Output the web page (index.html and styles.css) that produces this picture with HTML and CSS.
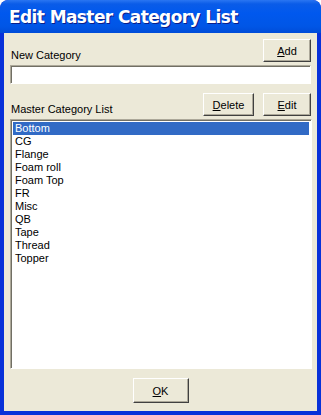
FILE: index.html
```html
<!DOCTYPE html>
<html lang="en">
<head>
  <meta charset="UTF-8" />
  <title>Edit Master Category List</title>
  <link rel="stylesheet" href="styles.css">
</head>
<body>

  <div class="window">
    <!-- TITLE BAR -->
    <div class="titlebar">Edit Master Category List</div>

    <div class="client">
      <!-- NEW CATEGORY -->
      <div class="row">
        <span class="label">New Category</span>
        <button class="btn btn-add"><u>A</u>dd</button>
      </div>
      <input type="text" class="field" />

      <!-- LIST HEADER -->
      <div class="row row-list">
        <span class="label">Master Category List</span>
        <div class="btns">
          <button class="btn btn-del"><u>D</u>elete</button>
          <button class="btn btn-edit"><u>E</u>dit</button>
        </div>
      </div>

      <!-- LIST -->
      <ul class="list">
        <li class="selected">Bottom</li>
        <li>CG</li>
        <li>Flange</li>
        <li>Foam roll</li>
        <li>Foam Top</li>
        <li>FR</li>
        <li>Misc</li>
        <li>QB</li>
        <li>Tape</li>
        <li>Thread</li>
        <li>Topper</li>
      </ul>

      <div class="footer">
        <button class="btn btn-ok"><u>O</u>K</button>
      </div>
    </div>
  </div>

</body>
</html>
```

FILE: styles.css
```css
body {
  margin: 0;
  font-family: "Liberation Sans", Arial, sans-serif;
  font-size: 11px;
  color: #000;
  background: #fff;
}

.window {
  width: 321px;
  height: 415px;
  box-sizing: border-box;
  display: flex;
  flex-direction: column;
  background: #0831d9;
  border-radius: 8px 8px 0 0;
  overflow: hidden;
}

.titlebar {
  height: 33px;
  box-sizing: border-box;
  padding: 7px 0 0 9px;
  font-family: "DejaVu Sans", sans-serif;
  font-weight: bold;
  font-size: 17px;
  letter-spacing: -0.6px;
  color: #fff;
  text-shadow: 1px 1px 0 #0a1e8a;
  background: linear-gradient(#2a76f2 0%, #0a5ce8 12%, #0058ee 40%, #0056e6 80%, #004cd8 100%);
  border-radius: 8px 8px 0 0;
}

.client {
  flex: 1;
  margin: 0 4px 4px 4px;
  padding: 6px 6px 0 6px;
  background: #ece9d8;
  display: flex;
  flex-direction: column;
}

.row {
  display: flex;
  justify-content: space-between;
  align-items: flex-end;
  height: 23px;
}

.label {
  padding: 0 0 1px 1px;
}

.btns {
  display: flex;
  gap: 9px;
}

.btn {
  font-family: "Liberation Sans", Arial, sans-serif;
  font-size: 11px;
  color: #000;
  background: #ece9d8;
  border: 1px solid;
  border-color: #fff #404040 #404040 #fff;
  box-shadow: inset -1px -1px 0 #aca899;
  padding: 0;
  height: 23px;
}

.btn-add,
.btn-edit {
  width: 48px;
}

.btn-del {
  width: 51px;
}

.btn-ok {
  width: 56px;
  height: 25px;
}

.field {
  margin: 3px 0 0 0;
  width: 301px;
  height: 19px;
  box-sizing: border-box;
  border: 1px solid;
  border-color: #aca899 #fff #fff #aca899;
  box-shadow: inset 1px 1px 0 #716f64;
  background: #fff;
  padding: 0;
}

.row-list {
  margin-top: 9px;
}

.list {
  list-style: none;
  margin: 3px 0 0 0;
  padding: 2px 2px;
  width: 302px;
  height: 250px;
  box-sizing: border-box;
  border: 1px solid;
  border-color: #aca899 #fff #fff #aca899;
  box-shadow: inset 1px 1px 0 #716f64;
  background: #fff;
}

.list li {
  height: 13px;
  line-height: 13px;
  padding-left: 2px;
}

.list li.selected {
  background: #316ac5;
  color: #fff;
}

.footer {
  margin-top: 9px;
  display: flex;
  justify-content: center;
}
```
